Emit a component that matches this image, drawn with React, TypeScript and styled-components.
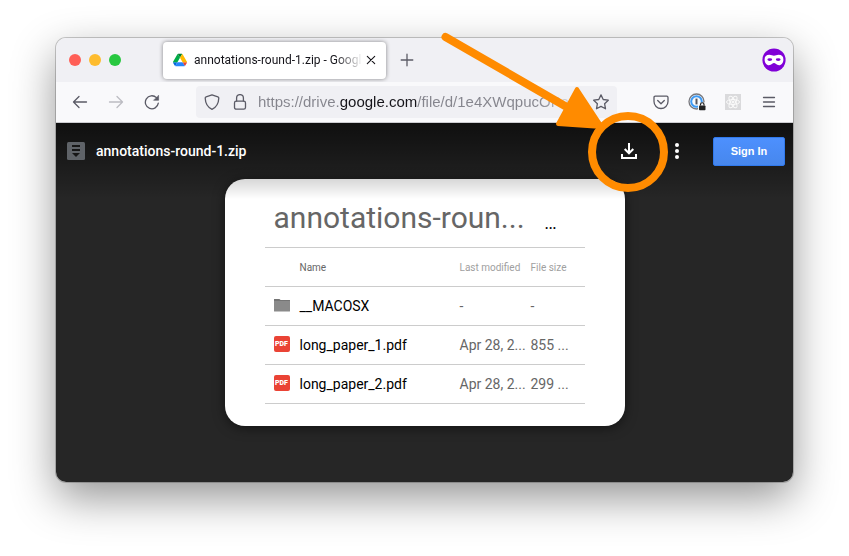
import React from "react";
import styled, { createGlobalStyle } from "styled-components";

const UI_FONT = `Roboto, "Liberation Sans", sans-serif`;

const GlobalStyle = createGlobalStyle`
  *, *::before, *::after { box-sizing: border-box; }
  body { margin: 0; background: #fff; font-family: ${UI_FONT}; }
  button, input { font: inherit; }
  svg { display: block; }
`;

const Desktop = styled.div`
  display: flex;
  min-height: 100vh;
  padding: 38px 56px 74px;
`;

const BrowserWindow = styled.section`
  display: flex;
  flex: 1;
  flex-direction: column;
  min-width: 0;
  border-radius: 10px;
  box-shadow: 0 0 0 1px rgba(0, 0, 0, 0.2), 0 16px 44px rgba(0, 0, 0, 0.42);
`;

const TabBar = styled.div`
  display: flex;
  align-items: center;
  height: 44px;
  padding: 0 7px 0 13px;
  background: #f0f0f4;
  border-radius: 10px 10px 0 0;
`;

const TrafficLights = styled.div`
  display: flex;
  gap: 8px;
  margin-right: 42px;
`;

const Light = styled.button<{ $color: string }>`
  width: 12px;
  height: 12px;
  padding: 0;
  border: 0;
  border-radius: 50%;
  background: ${(p) => p.$color};
`;

const Tab = styled.div`
  display: flex;
  align-items: center;
  width: 223px;
  height: 37px;
  padding: 0 7px 0 10px;
  background: #fff;
  border-radius: 4px;
  box-shadow: 0 0 4px rgba(0, 0, 0, 0.45);
`;

const TabTitle = styled.span`
  flex: 1;
  margin-left: 7px;
  color: #15141a;
  font-size: 12px;
  line-height: 16px;
  white-space: nowrap;
  mask-image: linear-gradient(to left, transparent, #000 28px);
`;

const IconButton = styled.button<{ $size?: number; $color?: string }>`
  display: flex;
  flex: none;
  align-items: center;
  justify-content: center;
  width: ${(p) => p.$size ?? 36}px;
  height: ${(p) => p.$size ?? 36}px;
  padding: 0;
  border: 0;
  background: none;
  color: ${(p) => p.$color ?? "#5b5b66"};
`;

const NewTabButton = styled(IconButton)`
  margin: 0 auto 0 3px;
`;

const ActionsButton = styled(IconButton)`
  width: 26px;
  margin-left: 18px;
  margin-right: 5px;
`;

const Toolbar = styled.div`
  display: flex;
  align-items: center;
  height: 41px;
  padding: 0 6px;
  background: #f9f9fb;
  border-bottom: 1px solid #ccccd0;
`;

const AddressBar = styled.label`
  display: flex;
  flex: 1;
  align-items: center;
  min-width: 0;
  height: 32px;
  margin: 0 26px;
  padding: 0 2px;
  background: #f0f0f4;
  border-radius: 4px;
  color: #5b5b66;
`;

const AddressInput = styled.input`
  flex: 1;
  min-width: 0;
  margin-left: 4px;
  padding: 0;
  border: 0;
  outline: 0;
  font-family: "Liberation Sans", sans-serif;
  font-size: 15px;
  line-height: 20px;
  color: transparent;
  background: linear-gradient(
    to right,
    #85858d 82px,
    #15141a 82px,
    #15141a 159px,
    #85858d 159px,
    #85858d 280px,
    transparent 324px
  );
  background-clip: text;
  -webkit-background-clip: text;
`;

const Viewer = styled.main`
  display: flex;
  flex: 1;
  flex-direction: column;
  padding-bottom: 56px;
  background: #262626;
  border-radius: 0 0 10px 10px;
`;

const ViewerHeader = styled.header`
  position: relative;
  z-index: 1;
  display: flex;
  align-items: center;
  height: 56px;
  padding: 0 8px 0 11px;

  &::before {
    content: "";
    position: absolute;
    z-index: -1;
    inset: 0 0 -20px;
    background: linear-gradient(rgba(0, 0, 0, 0.6), rgba(0, 0, 0, 0));
    pointer-events: none;
  }
`;

const FileName = styled.h1`
  flex: 1;
  margin: 0 0 0 11px;
  color: #fff;
  font-size: 14px;
  font-weight: 500;
  line-height: 20px;
`;

const DownloadSpot = styled.div`
  position: relative;
`;

const Annotation = styled.svg`
  position: absolute;
  right: -23px;
  bottom: -24px;
  pointer-events: none;
`;

const SignInButton = styled.button`
  width: 72px;
  height: 29px;
  margin-left: 18px;
  padding: 0;
  border: 1px solid #3079ed;
  border-radius: 2px;
  background: linear-gradient(#4d90fe, #4787ed);
  color: #fff;
  font-family: "Liberation Sans", sans-serif;
  font-size: 11px;
  font-weight: 700;
`;

const Card = styled.article`
  width: 400px;
  max-width: 100%;
  margin: 0 auto;
  padding: 12px 40px 22px;
  background: #fff;
  border-radius: 20px;
  box-shadow: 0 2px 12px rgba(0, 0, 0, 0.5);
`;

const CardHeading = styled.div`
  display: flex;
  align-items: flex-start;
  height: 56px;
  padding: 5px 28px 0 9px;
`;

const ArchiveTitle = styled.h2`
  flex: 1;
  margin: 0;
  color: #666;
  font-size: 30px;
  font-weight: 400;
  line-height: 44px;
  white-space: nowrap;
`;

const MoreButton = styled.button`
  padding: 20px 0 0;
  border: 0;
  background: none;
  color: #000;
  font-size: 14px;
  font-weight: 500;
  line-height: 16px;
`;

const FileTable = styled.table`
  width: 100%;
  table-layout: fixed;
  border-collapse: collapse;
  border-bottom: 1px solid #ccc;
`;

const IconCol = styled.col`
  width: 35px;
`;
const ModifiedCol = styled.col`
  width: 71px;
`;
const SizeCol = styled.col`
  width: 54px;
`;

const Row = styled.tr`
  height: 39px;
  border-top: 1px solid #ccc;
`;

const HeadCell = styled.th<{ $strong?: boolean }>`
  padding: 0;
  color: ${(p) => (p.$strong ? "#666" : "#a0a0a0")};
  font-size: 10px;
  font-weight: 400;
  text-align: left;
  white-space: nowrap;
`;

const Cell = styled.td<{ $name?: boolean }>`
  padding: 0;
  color: ${(p) => (p.$name ? "#000" : "#666")};
  font-size: 14px;
  line-height: 20px;
  white-space: nowrap;
`;

const IconCell = styled.td`
  padding: 0 0 2px 9px;
`;

const PdfBadge = styled.span`
  display: flex;
  align-items: center;
  justify-content: center;
  width: 16px;
  height: 16px;
  border-radius: 2px;
  background: #ea4335;
  color: #fff;
  font-size: 7px;
  font-weight: 900;
  line-height: 8px;
`;

const stroke = {
  fill: "none",
  stroke: "currentColor",
  strokeWidth: 1.3,
  strokeLinecap: "round" as const,
  strokeLinejoin: "round" as const,
};

const DriveLogo = () => (
  <svg width="14" height="14" viewBox="0 0 87.3 78">
    <path fill="#0066da" d="m6.6 66.85 3.85 6.65c.8 1.4 1.95 2.5 3.3 3.3l13.75-23.8h-27.5c0 1.55.4 3.1 1.2 4.5z" />
    <path fill="#00ac47" d="m43.65 25-13.75-23.8c-1.35.8-2.5 1.9-3.3 3.3l-25.4 44a9.06 9.06 0 0 0 -1.2 4.5h27.5z" />
    <path fill="#ea4335" d="m73.55 76.8c1.35-.8 2.5-1.9 3.3-3.3l1.6-2.75 7.65-13.25c.8-1.4 1.2-2.95 1.2-4.5h-27.5l5.85 11.5z" />
    <path fill="#00832d" d="m43.65 25 13.75-23.8c-1.35-.8-2.9-1.2-4.5-1.2h-18.5c-1.6 0-3.15.45-4.5 1.2z" />
    <path fill="#2684fc" d="m59.8 53h-32.3l-13.75 23.8c1.35.8 2.9 1.2 4.5 1.2h50.8c1.6 0 3.15-.45 4.5-1.2z" />
    <path fill="#ffba00" d="m73.4 26.5-12.7-22c-.8-1.4-1.95-2.5-3.3-3.3l-13.75 23.8 16.15 28h27.45c0-1.55-.4-3.1-1.2-4.5z" />
  </svg>
);

const CloseIcon = () => (
  <svg width="10" height="10" viewBox="0 0 10 10" {...stroke} strokeWidth={1.1}>
    <path d="M1.3 1.3l7.4 7.4M8.7 1.3L1.3 8.7" />
  </svg>
);

const PlusIcon = () => (
  <svg width="14" height="14" viewBox="0 0 14 14" {...stroke}>
    <path d="M7 1.2v11.6M1.2 7h11.6" />
  </svg>
);

const PrivateMask = () => (
  <svg width="24" height="24" viewBox="0 0 24 24">
    <circle cx="12" cy="12" r="11.6" fill="#8000d7" />
    <path
      fill="#fff"
      d="M7.4 6.800c2 0 3.200.9 4.600.9s2.600-.9 4.600-.9c3.100 0 4.800 1.600 4.800 4.600 0 3.200-1.800 5.800-4.400 5.800-2.600 0-3.600-2.200-5-2.200s-2.400 2.200-5 2.200c-2.600 0-4.400-2.600-4.400-5.800 0-3 1.700-4.600 4.800-4.600z"
    />
    <ellipse cx="7.800" cy="11.600" rx="2.400" ry="1.400" fill="#8000d7" />
    <ellipse cx="16.200" cy="11.600" rx="2.400" ry="1.400" fill="#8000d7" />
  </svg>
);

const ArrowIcon = ({ forward = false }: { forward?: boolean }) => (
  <svg width="16" height="16" viewBox="0 0 16 16" {...stroke}>
    <path d={forward ? "M1.500 8h13M9 2.500L14.500 8 9 13.500" : "M14.500 8h-13M7 2.500L1.500 8 7 13.500"} />
  </svg>
);

const ReloadIcon = () => (
  <svg width="16" height="16" viewBox="0 0 16 16" {...stroke}>
    <path d="M14.300 9.200A6.500 6.500 0 1 1 12.400 3.600" />
    <path d="M14.600 1.600v4.700H9.900z" fill="currentColor" strokeWidth="0.600" />
  </svg>
);

const ShieldIcon = () => (
  <svg width="16" height="16" viewBox="0 0 16 16" {...stroke}>
    <path d="M8 .8l5.900 2.100c.6.2.9.6.9 1.200C14.600 9.500 12.700 13.300 8 15.300 3.300 13.300 1.400 9.500 1.200 4.100c0-.6.3-1 .9-1.200z" />
  </svg>
);

const LockIcon = () => (
  <svg width="16" height="16" viewBox="0 0 16 16" {...stroke}>
    <rect x="2.500" y="7.200" width="11" height="8" rx="1.800" />
    <path d="M4.600 7V4a3.400 3.400 0 0 1 6.800 0v3" />
  </svg>
);

const StarIcon = () => (
  <svg width="16" height="16" viewBox="0 0 16 16" {...stroke}>
    <path d="M8 .9l2.200 4.600 5.100.7-3.700 3.500.9 5.100L8 12.400l-4.500 2.400.9-5.100L.7 6.200l5.100-.7z" />
  </svg>
);

const PocketIcon = () => (
  <svg width="16" height="16" viewBox="0 0 16 16" {...stroke}>
    <path d="M2.300 2.200h11.400c.8 0 1.300.5 1.300 1.300V7.500a7 7 0 0 1-14 0V3.500c0-.8.5-1.300 1.300-1.300z" />
    <path d="M4.700 6.500L8 9.700l3.300-3.200" />
  </svg>
);

const PasswordIcon = () => (
  <svg width="18" height="18" viewBox="0 0 18 18" fill="none">
    <circle cx="8.500" cy="8.500" r="7.500" stroke="#77777c" strokeWidth="1.300" />
    <circle cx="8.500" cy="8.500" r="5.300" stroke="#3e9bf5" strokeWidth="2" />
    <path d="M8.500 5.600v5.800" stroke="#55555c" strokeWidth="2" />
    <rect x="10" y="9.500" width="8" height="8.500" fill="#f9f9fb" />
    <rect x="11" y="12.500" width="6.500" height="4.800" rx=".8" fill="#222" />
    <path d="M12.500 12.500v-1a1.750 1.750 0 0 1 3.500 0v1" stroke="#222" strokeWidth="1.200" />
  </svg>
);

const ReactToolsIcon = () => (
  <svg width="16" height="16" viewBox="0 0 16 16" fill="none" stroke="#fafafa" strokeWidth="1">
    <rect width="16" height="16" fill="#dadadc" stroke="none" />
    <ellipse cx="8" cy="8" rx="6.500" ry="2.500" />
    <ellipse cx="8" cy="8" rx="6.500" ry="2.500" transform="rotate(60 8 8)" />
    <ellipse cx="8" cy="8" rx="6.500" ry="2.500" transform="rotate(120 8 8)" />
    <circle cx="8" cy="8" r="1" fill="#fafafa" />
  </svg>
);

const MenuIcon = () => (
  <svg width="14" height="14" viewBox="0 0 14 14" {...stroke}>
    <path d="M1.500 2.500h11M1.500 7h11M1.500 11.500h11" />
  </svg>
);

const ArchiveIcon = () => (
  <svg width="18" height="18" viewBox="0 0 18 18">
    <rect width="18" height="18" rx="1.500" fill="#5f6368" />
    <path d="M5 3h8v2H5zM5 7h8v2H5zM5 11h8l-4 4z" fill="#161616" />
  </svg>
);

const DownloadIcon = () => (
  <svg width="18" height="18" viewBox="0 0 18 18" fill="none" stroke="#fff" strokeWidth="2">
    <path d="M9 1v10M4.700 7L9 11.300 13.300 7M2 12v4h14v-4" />
  </svg>
);

const DotsIcon = () => (
  <svg width="4" height="16" viewBox="0 0 4 16" fill="#fff">
    <circle cx="2" cy="2" r="2" />
    <circle cx="2" cy="8" r="2" />
    <circle cx="2" cy="14" r="2" />
  </svg>
);

const FolderIcon = () => (
  <svg width="16" height="13" viewBox="0 0 16 13">
    <path d="M.5 0H5l1.500 1H15.500a.5.5 0 0 1 .5.5V12a.5.5 0 0 1-.5.5H.5A.5.5 0 0 1 0 12V.5A.5.5 0 0 1 .5 0z" fill="#8a8a8a" />
    <path d="M0 2V.5A.5.5 0 0 1 .5 0H5l1.500 1H15.500a.5.5 0 0 1 .5.5V2z" fill="#747474" />
  </svg>
);

const Pointer = () => (
  <Annotation width="228" height="160" viewBox="0 0 228 160" aria-hidden="true">
    <circle cx="187" cy="120" r="36" fill="none" stroke="#ff8b00" strokeWidth="8" />
    <path d="M4.500 5L124 74" stroke="#ff8b00" strokeWidth="8" strokeLinecap="round" />
    <path d="M136 57l25 38-44-3z" fill="#ff8b00" stroke="#ff8b00" strokeWidth="4" strokeLinejoin="round" />
  </Annotation>
);

const files = [
  { name: "__MACOSX", modified: "-", size: "-", folder: true },
  { name: "long_paper_1.pdf", modified: "Apr 28, 2...", size: "855 ...", folder: false },
  { name: "long_paper_2.pdf", modified: "Apr 28, 2...", size: "299 ...", folder: false },
];

export default function App() {
  return (
    <>
      <GlobalStyle />
      <Desktop>
        <BrowserWindow>
          <TabBar>
            <TrafficLights>
              <Light $color="#ff5f57" aria-label="Close window" />
              <Light $color="#febc2e" aria-label="Minimize window" />
              <Light $color="#28c840" aria-label="Zoom window" />
            </TrafficLights>
            <Tab>
              <DriveLogo />
              <TabTitle>annotations-round-1.zip - Googl</TabTitle>
              <IconButton $size={16} $color="#15141a" aria-label="Close tab">
                <CloseIcon />
              </IconButton>
            </Tab>
            <NewTabButton aria-label="New tab">
              <PlusIcon />
            </NewTabButton>
            <PrivateMask />
          </TabBar>
          <Toolbar>
            <IconButton aria-label="Back"><ArrowIcon /></IconButton>
            <IconButton $color="#bcbcc2" aria-label="Forward"><ArrowIcon forward /></IconButton>
            <IconButton aria-label="Reload"><ReloadIcon /></IconButton>
            <AddressBar>
              <IconButton $size={28} aria-label="Tracking protection"><ShieldIcon /></IconButton>
              <IconButton $size={28} aria-label="Site security"><LockIcon /></IconButton>
              <AddressInput aria-label="Address" defaultValue="https://drive.google.com/file/d/1e4XWqpucOPaf" />
              <IconButton $size={28} aria-label="Bookmark"><StarIcon /></IconButton>
            </AddressBar>
            <IconButton aria-label="Save to Pocket"><PocketIcon /></IconButton>
            <IconButton aria-label="Password manager"><PasswordIcon /></IconButton>
            <IconButton aria-label="React developer tools"><ReactToolsIcon /></IconButton>
            <IconButton aria-label="Menu"><MenuIcon /></IconButton>
          </Toolbar>
          <Viewer>
            <ViewerHeader>
              <ArchiveIcon />
              <FileName>annotations-round-1.zip</FileName>
              <DownloadSpot>
                <IconButton $size={34} aria-label="Download"><DownloadIcon /></IconButton>
                <Pointer />
              </DownloadSpot>
              <ActionsButton aria-label="More actions"><DotsIcon /></ActionsButton>
              <SignInButton>Sign In</SignInButton>
            </ViewerHeader>
            <Card>
              <CardHeading>
                <ArchiveTitle>annotations-roun...</ArchiveTitle>
                <MoreButton aria-label="Show full path">...</MoreButton>
              </CardHeading>
              <FileTable>
                <colgroup>
                  <IconCol />
                  <col />
                  <ModifiedCol />
                  <SizeCol />
                </colgroup>
                <thead>
                  <Row>
                    <HeadCell aria-label="Type" />
                    <HeadCell $strong>Name</HeadCell>
                    <HeadCell>Last modified</HeadCell>
                    <HeadCell>File size</HeadCell>
                  </Row>
                </thead>
                <tbody>
                  {files.map((file) => (
                    <Row key={file.name}>
                      <IconCell>{file.folder ? <FolderIcon /> : <PdfBadge>PDF</PdfBadge>}</IconCell>
                      <Cell $name>{file.name}</Cell>
                      <Cell>{file.modified}</Cell>
                      <Cell>{file.size}</Cell>
                    </Row>
                  ))}
                </tbody>
              </FileTable>
            </Card>
          </Viewer>
        </BrowserWindow>
      </Desktop>
    </>
  );
}
